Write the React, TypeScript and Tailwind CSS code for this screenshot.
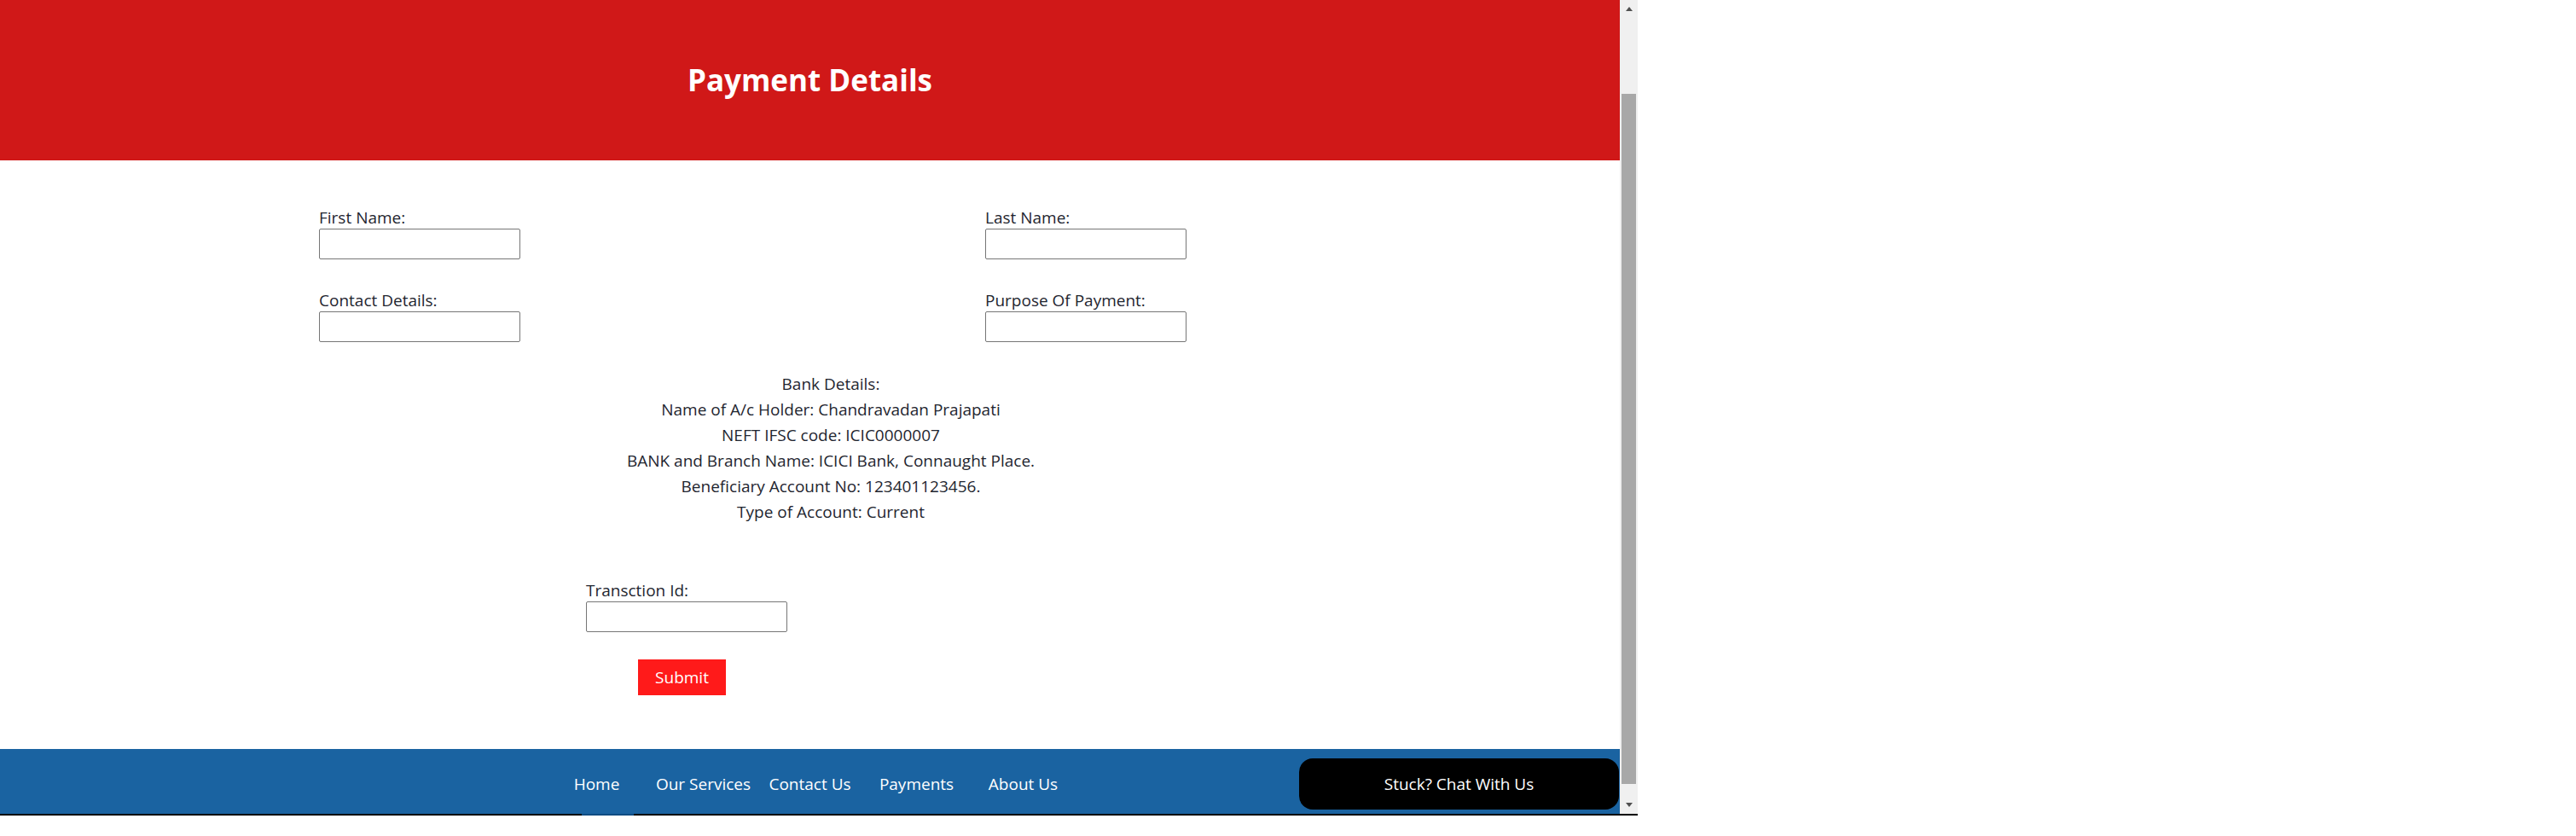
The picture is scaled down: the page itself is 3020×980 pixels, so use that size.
const leftFields = ["First Name:", "Contact Details:"];
const rightFields = ["Last Name:", "Purpose Of Payment:"];

const bankLines = [
  "Bank Details:",
  "Name of A/c Holder: Chandravadan Prajapati",
  "NEFT IFSC code: ICIC0000007",
  "BANK and Branch Name: ICICI Bank, Connaught Place.",
  "Beneficiary Account No: 123401123456.",
  "Type of Account: Current",
];

const navLinks = ["Home", "Our Services", "Contact Us", "Payments", "About Us"];

function Field({ label }: { label: string }) {
  return (
    <div className="flex flex-col items-start">
      <label className="leading-[24px] pb-px">{label}</label>
      <input
        type="text"
        className="h-[36px] w-[236px] rounded-[2px] border border-[#767676] bg-white px-1 outline-none"
      />
    </div>
  );
}

function Scrollbar() {
  return (
    <div className="flex w-[21px] flex-col bg-[#f0f0f0]">
      <div className="flex h-[21px] items-center justify-center">
        <span className="h-0 w-0 border-x-[4px] border-b-[5px] border-x-transparent border-b-[#505050]" />
      </div>
      <div className="h-[89px]" />
      <div className="mx-[2px] h-[809px] bg-[#a8a8a8]" />
      <div className="flex-1" />
      <div className="flex h-[21px] items-center justify-center">
        <span className="h-0 w-0 border-x-[4px] border-t-[5px] border-x-transparent border-t-[#505050]" />
      </div>
    </div>
  );
}

export default function App() {
  return (
    <div className="w-[1920px] bg-white font-['Open_Sans',sans-serif]">
      <div className="flex h-[954px]">
        <div className="relative flex w-[1899px] flex-col overflow-hidden">
          <header className="flex h-[188px] items-center justify-center bg-[#d01818]">
            <h1 className="text-[35px] font-bold text-white">Payment Details</h1>
          </header>

          <main className="ml-[374px] w-[1200px] flex-1 pt-[55px] text-[19px] text-[#1f2630]">
            <div className="grid grid-cols-[781px_1fr] gap-y-[36px]">
              {leftFields.map((l, i) => (
                <div key={l} className="contents">
                  <Field label={l} />
                  <Field label={rightFields[i]} />
                </div>
              ))}
            </div>

            <div className="mt-[34px] text-center leading-[30px]">
              {bankLines.map((line) => (
                <p key={line}>{line}</p>
              ))}
            </div>

            <div className="ml-[313px] mt-[65px]">
              <Field label="Transction Id:" />
            </div>

            <button className="ml-[374px] mt-[32px] h-[42px] w-[103px] bg-[#ff1a1a] text-white">
              Submit
            </button>
          </main>

          <footer className="flex h-[76px] justify-center bg-[#1a63a1] pt-[6px] text-[19px] text-white">
            {navLinks.map((n) => (
              <a key={n} href="#" className="flex w-[125px] items-center justify-center">
                {n}
              </a>
            ))}
          </footer>

          <button className="absolute bottom-[5px] right-[1px] flex h-[60px] w-[375px] items-center justify-center rounded-[16px] bg-black text-[19px] text-white">
            Stuck? Chat With Us
          </button>
        </div>
        <Scrollbar />
      </div>
      <div className="flex h-[2px]">
        <div className="w-[682px] bg-black" />
        <div className="w-[61px] bg-[#0f4c82]" />
        <div className="flex-1 bg-black" />
      </div>
    </div>
  );
}
